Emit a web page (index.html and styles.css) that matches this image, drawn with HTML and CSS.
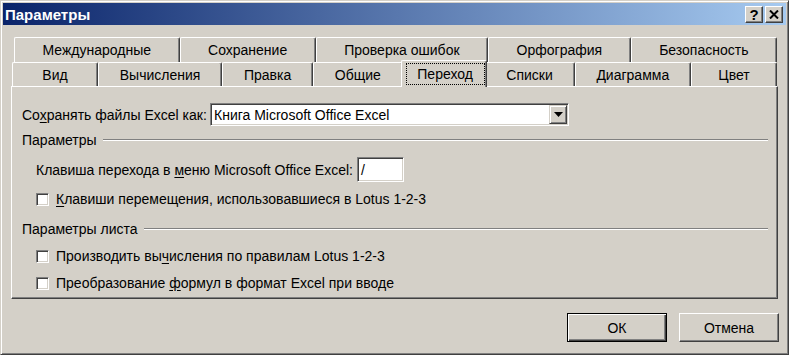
FILE: index.html
```html
<!DOCTYPE html>
<html lang="ru">
<head>
  <meta charset="UTF-8" />
  <title>Параметры</title>
  <link rel="stylesheet" href="styles.css">
</head>
<body>
  <div class="window">
    <div class="titlebar">
      <span class="title">Параметры</span>
      <div class="caption-buttons">
        <span class="cap-btn help">?</span>
        <span class="cap-btn close">
          <svg width="10" height="9" viewBox="0 0 10 9">
            <path d="M1 0.5 L9 8.5 M9 0.5 L1 8.5" stroke="#000" stroke-width="2" fill="none"/>
          </svg>
        </span>
      </div>
    </div>

    <div class="client">
      <div class="tabs">
        <div class="tab-row back">
          <div class="tab">Международные</div>
          <div class="tab">Сохранение</div>
          <div class="tab">Проверка ошибок</div>
          <div class="tab">Орфография</div>
          <div class="tab">Безопасность</div>
        </div>
        <div class="tab-row front">
          <div class="tab">Вид</div>
          <div class="tab">Вычисления</div>
          <div class="tab">Правка</div>
          <div class="tab">Общие</div>
          <div class="tab active"><span class="focus">Переход</span></div>
          <div class="tab">Списки</div>
          <div class="tab">Диаграмма</div>
          <div class="tab">Цвет</div>
        </div>
      </div>

      <div class="panel">
        <div class="save-row">
          <span class="save-label">Со<u>х</u>ранять файлы Excel как:</span>
          <div class="select">
            <span class="select-value">Книга Microsoft Office Excel</span>
            <span class="select-btn">
              <svg width="9" height="5" viewBox="0 0 9 5"><path d="M0 0 H9 L4.5 5 Z" fill="#000"/></svg>
            </span>
          </div>
        </div>

        <div class="group-title"><span>Параметры</span></div>
        <div class="key-row">
          <span>Клавиша перехода в <u>м</u>еню Microsoft Office Excel:</span>
          <span class="textbox">/</span>
        </div>
        <div class="check-row first">
          <span class="checkbox"></span>
          <span><u>К</u>лавиши перемещения, использовавшиеся в Lotus 1-2-3</span>
        </div>

        <div class="group-title sheet"><span>Параметры листа</span></div>
        <div class="check-row">
          <span class="checkbox"></span>
          <span>Производить вы<u>ч</u>исления по правилам Lotus 1-2-3</span>
        </div>
        <div class="check-row last">
          <span class="checkbox"></span>
          <span>Преобразование <u>ф</u>ормул в формат Excel при вводе</span>
        </div>
      </div>

      <div class="actions">
        <button class="btn default">ОК</button>
        <button class="btn">Отмена</button>
      </div>
    </div>
  </div>
</body>
</html>
```

FILE: styles.css
```css
body, html {
  margin: 0;
  padding: 0;
  background: #d4d0c8;
  font-family: 'Liberation Sans', Arial, sans-serif;
  font-size: 14px;
  color: #000;
}

u {
  text-decoration: underline;
  text-underline-offset: 2px;
}

.window {
  width: 789px;
  height: 355px;
  box-sizing: border-box;
  padding: 2px;
  background: #d4d0c8;
  border: 1px solid;
  border-color: #d4d0c8 #404040 #404040 #d4d0c8;
  box-shadow: inset 1px 1px #fff, inset -1px -1px #808080;
}

.titlebar {
  height: 22px;
  display: flex;
  align-items: center;
  justify-content: space-between;
  padding: 0 3px 0 2px;
  background: linear-gradient(to right, #0a246a, #a6caf0);
}

.title {
  color: #fff;
  font-weight: bold;
  font-size: 15px;
}

.caption-buttons {
  display: flex;
  gap: 2px;
}

.cap-btn {
  width: 18px;
  height: 17px;
  box-sizing: border-box;
  display: flex;
  align-items: center;
  justify-content: center;
  background: #d4d0c8;
  border: 1px solid;
  border-color: #fff #404040 #404040 #fff;
  box-shadow: inset -1px -1px #808080;
  font-weight: bold;
  font-size: 15px;
  line-height: 1;
}

.client {
  padding: 12px 8px 0 8px;
}

.tab-row {
  display: flex;
}

.tab-row.back {
  height: 25px;
  margin: 0 1px 0 3px;
}

.tab-row.front {
  height: 24px;
  margin: 0 1px 0 1px;
}

.tab {
  flex: 1 1 auto;
  min-width: 86px;
  display: flex;
  align-items: center;
  justify-content: center;
  padding: 0 16px;
  box-sizing: border-box;
  background: #d4d0c8;
  border-top: 1px solid #fff;
  border-left: 1px solid #fff;
  border-right: 1px solid #404040;
  box-shadow: inset -1px 0 #808080;
  border-radius: 2px 2px 0 0;
  white-space: nowrap;
}

.tab.active {
  position: relative;
  z-index: 1;
  margin: -2px -2px -1px -2px;
}

.focus {
  display: flex;
  align-items: center;
  justify-content: center;
  align-self: stretch;
  flex: 1;
  margin: 2px -15px 2px -12px;
  border: 1px dotted #000;
}

.panel {
  height: 213px;
  box-sizing: border-box;
  padding: 16px 9px 0 10px;
  border: 1px solid;
  border-color: #fff #404040 #404040 #fff;
  box-shadow: inset -1px -1px #808080;
}

.save-row {
  display: flex;
  align-items: center;
  height: 23px;
}

.save-label {
  width: 188px;
}

.select {
  width: 359px;
  height: 23px;
  box-sizing: border-box;
  display: flex;
  align-items: center;
  background: #fff;
  border: 1px solid;
  border-color: #808080 #fff #fff #808080;
  box-shadow: inset 1px 1px #404040, inset -1px -1px #d4d0c8;
}

.select-value {
  flex: 1;
  padding-left: 3px;
}

.select-btn {
  width: 18px;
  height: 19px;
  margin-right: 1px;
  box-sizing: border-box;
  display: flex;
  align-items: center;
  justify-content: center;
  background: #d4d0c8;
  border: 1px solid;
  border-color: #d4d0c8 #404040 #404040 #d4d0c8;
  box-shadow: inset 1px 1px #fff, inset -1px -1px #808080;
}

.group-title {
  display: flex;
  align-items: center;
  gap: 6px;
  height: 16px;
  margin-top: 6px;
}

.group-title::after {
  content: "";
  flex: 1;
  height: 0;
  border-top: 1px solid #808080;
  border-bottom: 1px solid #fff;
}

.group-title.sheet {
  margin-top: 14px;
}

.key-row {
  display: flex;
  align-items: center;
  gap: 4px;
  height: 25px;
  margin: 9px 0 0 14px;
}

.textbox {
  width: 47px;
  height: 25px;
  box-sizing: border-box;
  padding-left: 3px;
  display: flex;
  align-items: center;
  background: #fff;
  border: 1px solid;
  border-color: #808080 #fff #fff #808080;
  box-shadow: inset 1px 1px #404040, inset -1px -1px #d4d0c8;
}

.check-row {
  display: flex;
  align-items: center;
  gap: 7px;
  height: 16px;
  margin: 11px 0 0 14px;
}

.check-row.first {
  margin-top: 9px;
}

.check-row.last {
  margin-top: 11px;
}

.checkbox {
  width: 13px;
  height: 13px;
  box-sizing: border-box;
  background: #fff;
  border: 1px solid;
  border-color: #808080 #fff #fff #808080;
  box-shadow: inset 1px 1px #404040, inset -1px -1px #d4d0c8;
}

.actions {
  display: flex;
  justify-content: flex-end;
  gap: 12px;
  margin-top: 14px;
  margin-right: -1px;
}

.btn {
  width: 100px;
  height: 29px;
  box-sizing: border-box;
  padding: 0;
  font: inherit;
  color: #000;
  background: #d4d0c8;
  border: 1px solid;
  border-color: #fff #404040 #404040 #fff;
  box-shadow: inset -1px -1px #808080;
}

.btn.default {
  border: 1px solid #000;
  box-shadow: inset 1px 1px #fff, inset -1px -1px #404040, inset -2px -2px #808080;
}
```
